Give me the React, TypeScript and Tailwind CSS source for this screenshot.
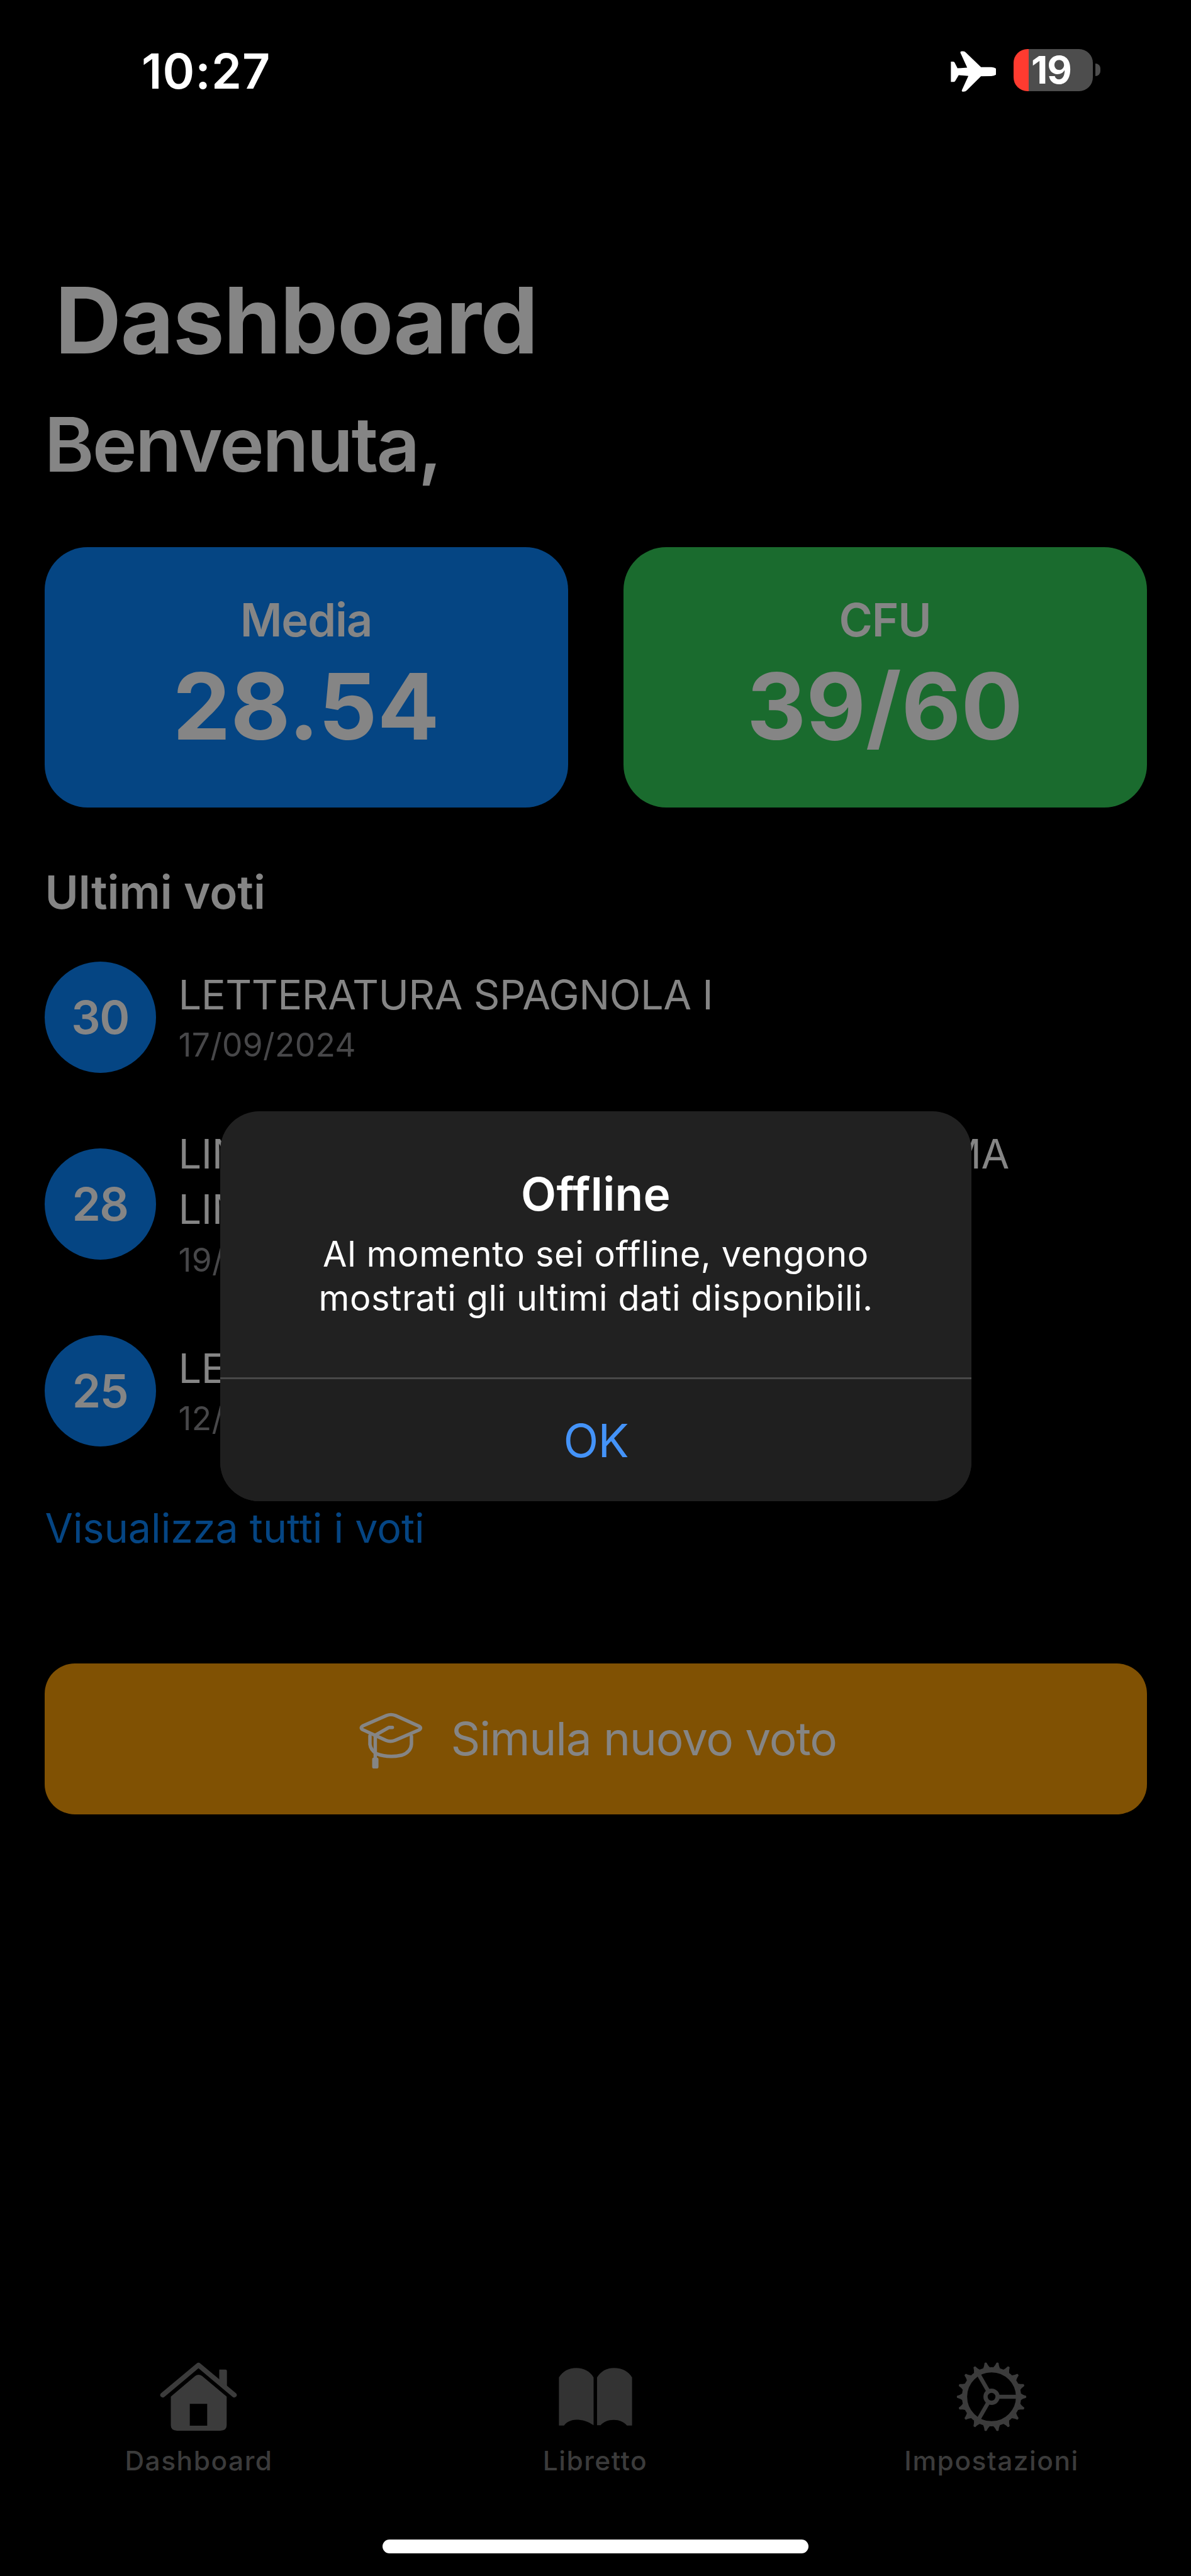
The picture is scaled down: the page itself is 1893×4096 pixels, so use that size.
import React from "react";

const grades = [
  { grade: "30", lines: ["LETTERATURA SPAGNOLA I"], date: "17/09/2024" },
  { grade: "28", lines: ["LINGUA E LINGUISTICA SPAGNOLA: PRIMA", "LINGUA"], date: "19/07/2024" },
  { grade: "25", lines: ["LETTERATURA ITALIANA"], date: "12/06/2024" },
];

function StatusBar() {
  return (
    <header className="flex h-[222px] items-center justify-between pl-[225px] pr-[144px] text-white">
      <span className="mt-[4px] text-[77px] font-semibold leading-[90px] tracking-[1px]">10:27</span>
      <div className="flex items-center">
        <svg className="mt-[5px] h-[65px] w-[72px]" viewBox="188 125 384 372" preserveAspectRatio="none" fill="currentColor">
          <path d="M190 222h16q10 0 15 8l25 53 82-6-56-132q-6-17 10-17h12q14 0 24 13l127 132 88 0q30 2 42 16 11 12 11 25t-11 25q-14 12-42 15l-88 1-121 129q-10 12-26 12h-6q-14-1-8-16l54-128-82-7-30 55q-5 7-14 7H190z" />
        </svg>
        <div className="ml-[28px] flex h-[67px] w-[126px] items-center rounded-[22px] bg-[linear-gradient(90deg,#ff3b30_24.5px,#4d4d4d_24.5px)] pl-[28px]">
          <span className="text-[61px] font-bold leading-[66px] tracking-[-1px]">19</span>
        </div>
        <div className="ml-[4px] h-[20px] w-[8px] rounded-r-full bg-[#4d4d4d]" />
      </div>
    </header>
  );
}

function StatCard({ label, value, tone }: { label: string; value: string; tone: string }) {
  return (
    <div className={`flex h-[414px] flex-1 flex-col items-center rounded-[68px] pt-[71px] ${tone}`}>
      <span className="text-[72.5px] font-semibold leading-[90px] tracking-[-1.2px]">{label}</span>
      <span className="mt-[7px] text-[146px] font-bold leading-[170px]">{value}</span>
    </div>
  );
}

function CapIcon() {
  return (
    <svg className="h-[122px] w-[127px]" viewBox="0 0 720 690" fill="none" stroke="currentColor" strokeWidth="31" strokeLinecap="round" strokeLinejoin="round">
      <path d="M320 134q38-16 80 0l212 96q28 16 0 34L396 358q-42 16-82 0L106 262q-28-16 0-34z" />
      <path d="M170 318v76q6 50 60 85 110 40 230 12 80-30 84-100v-70" />
      <path d="M372 242h-32L218 312v210" />
      <rect x="190" y="512" width="57" height="100" rx="18" fill="currentColor" stroke="none" />
    </svg>
  );
}

function HouseIcon() {
  return (
    <svg className="h-[110px] w-[124px]" viewBox="466 180 609 610" preserveAspectRatio="none">
      <path d="M489 470L768 206 1047 470" fill="none" stroke="currentColor" strokeWidth="41" strokeLinecap="round" strokeLinejoin="round" />
      <path d="M930 245h48q12 0 12 12v146l-60-56z" fill="currentColor" />
      <path fillRule="evenodd" d="M552 484L742 302q26-22 54 0L988 484v252q0 48-50 48H602q-50 0-50-48zM700 548v192h136V548z" fill="currentColor" />
    </svg>
  );
}

function BookIcon() {
  return (
    <svg className="h-[92px] w-[117px] text-[#333333]" viewBox="318 224 576 520" preserveAspectRatio="none" fill="currentColor">
      <path d="M320 742V310C350 255 395 226 455 226s110 32 136 84v430c-44-36-90-50-136-50-44 2-76 22-95 52z" />
      <path d="M618 740V310C650 255 690 226 750 226c66 0 116 34 142 84v432h-40c-26-32-62-50-102-50-48 0-80 18-104 48z" />
    </svg>
  );
}

const teeth = Array.from({ length: 18 }, (_, i) => i * 20);

function GearIcon() {
  return (
    <svg className="h-[112px] w-[112px]" viewBox="-316 -316 632 632" fill="none" stroke="currentColor">
      <circle r="242" strokeWidth="46" />
      <circle r="54" strokeWidth="38" />
      {[0, 120, 240].map((a) => (
        <path key={a} d="M66 0H230" strokeWidth="36" transform={`rotate(${a})`} />
      ))}
      {teeth.map((a) => (
        <path key={a} d="M256-34L282-19Q296-13 308-10Q315 0 308 10Q296 13 282 19L256 34z" fill="currentColor" stroke="none" transform={`rotate(${a})`} />
      ))}
    </svg>
  );
}

function Tab({ icon, label }: { icon: React.ReactNode; label: string }) {
  return (
    <div className="flex w-[630px] flex-col items-center">
      <div className="flex h-[112px] items-center">{icon}</div>
      <span className="mt-[19px] text-[42.5px] font-medium leading-[54px] tracking-[1.5px]">{label}</span>
    </div>
  );
}

export default function App() {
  return (
    <div className="relative flex h-[4096px] w-[1893px] flex-col overflow-hidden bg-black font-['Inter',sans-serif] text-[#858585]">
      <StatusBar />

      <main className="flex flex-col px-[70.5px]">
        <h1 className="ml-[17px] mt-[197px] text-[146px] font-bold leading-[180px] tracking-[-1.3px]">Dashboard</h1>
        <h2 className="mt-[33px] text-[120px] font-semibold leading-[150px] tracking-[-2.8px]">Benvenuta,</h2>

        <section className="mt-[88px] flex gap-[88px]">
          <StatCard label="Media" value="28.54" tone="bg-[#054583]" />
          <StatCard label="CFU" value="39/60" tone="bg-[#1a6b2e]" />
        </section>

        <h3 className="ml-[1px] mt-[90px] text-[72.5px] font-semibold leading-[90px]">Ultimi voti</h3>

        <ul className="mt-[65px] flex flex-col gap-[84.5px]">
          {grades.map((g) => (
            <li key={g.grade} className="flex items-center gap-[36px]">
              <span className="flex size-[177px] shrink-0 items-center justify-center rounded-full bg-[#054583] text-[73px] font-semibold tracking-[-1.5px]">{g.grade}</span>
              <div className="flex flex-col whitespace-nowrap">
                {g.lines.map((l) => (
                  <span key={l} className="text-[65px] leading-[88.5px] tracking-[-0.5px]">{l}</span>
                ))}
                <span className="text-[51.5px] leading-[71px] tracking-[0.3px] text-[#474749]">{g.date}</span>
              </div>
            </li>
          ))}
        </ul>

        <a className="ml-[1px] mt-[90px] text-[64.5px] leading-[80px] text-[#054583]">Visualizza tutti i voti</a>

        <button className="mt-[175px] flex h-[240px] items-center rounded-[48px] bg-[#805103] pl-[487px]">
          <CapIcon />
          <span className="ml-[32px] text-[73px] leading-[90px] tracking-[-1.2px]">Simula nuovo voto</span>
        </button>
      </main>

      <nav className="mt-[870px] flex pl-[1px] text-[#3b3b3b]">
        <Tab icon={<HouseIcon />} label="Dashboard" />
        <Tab icon={<BookIcon />} label="Libretto" />
        <Tab icon={<GearIcon />} label="Impostazioni" />
      </nav>
      <div className="mx-auto mt-[98px] h-[22px] w-[677px] shrink-0 rounded-full bg-white" />

      <div role="alertdialog" className="absolute left-[350px] top-[1767px] flex h-[620px] w-[1194px] flex-col items-center rounded-[62px] bg-[#212121] text-white">
        <h4 className="mt-[87px] text-[73px] font-semibold leading-[90px] tracking-[0.3px]">Offline</h4>
        <p className="mt-[15px] whitespace-nowrap text-center text-[55.8px] leading-[70px] tracking-[0.6px]">
          Al momento sei offline, vengono
          <br />
          mostrati gli ultimi dati disponibili.
        </p>
        <div className="mt-[91px] flex w-full flex-1 items-center justify-center rounded-b-[62px] border-t-[3px] border-[#484848] bg-[#1f1f1f] pt-[2px] text-[73px] tracking-[-1px] text-[#4493f8]">OK</div>
      </div>
    </div>
  );
}
